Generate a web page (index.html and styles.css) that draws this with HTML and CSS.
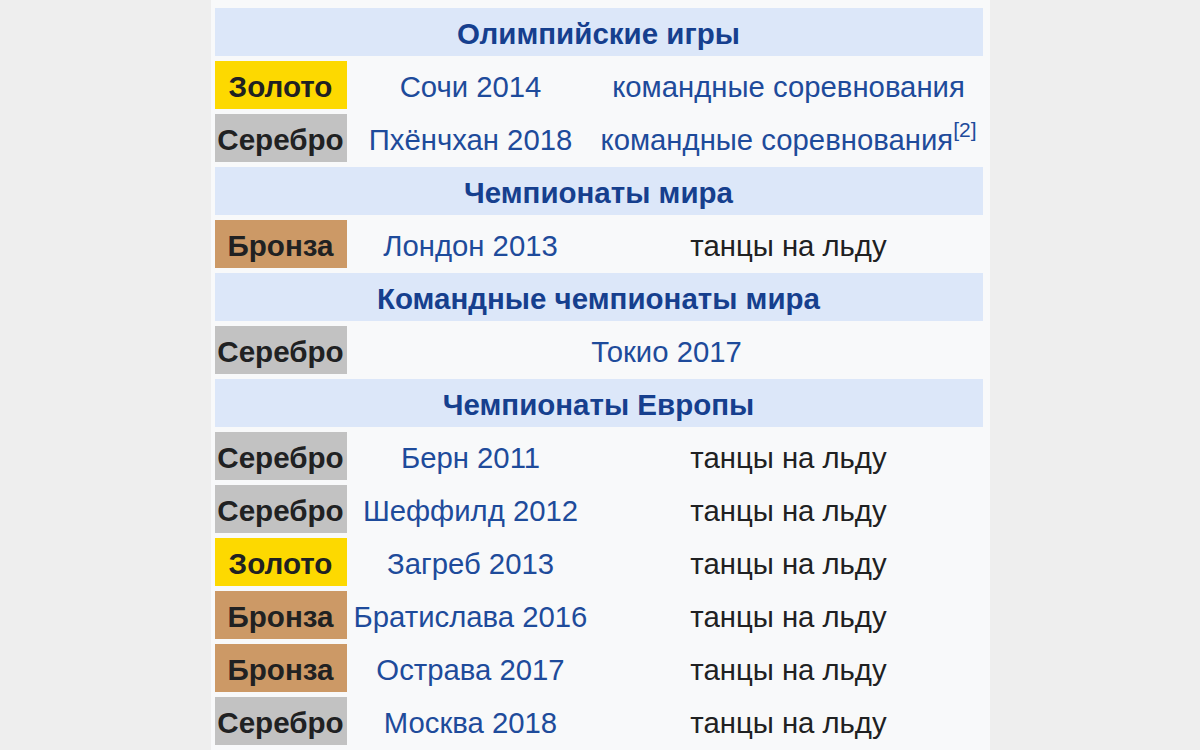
FILE: index.html
```html
<!DOCTYPE html>
<html lang="ru">
<head>
<meta charset="utf-8">
<title>Медали</title>
<link rel="stylesheet" href="styles.css">
</head>
<body>
<div class="panel">
  <div class="medals">
    <div class="head">Олимпийские игры</div>
    <div class="medal gold">Золото</div><div class="link">Сочи 2014</div><div class="link">командные соревнования</div>
    <div class="medal silver">Серебро</div><div class="link">Пхёнчхан 2018</div><div class="link"><span>командные соревнования<sup class="ref">[2]</sup></span></div>

    <div class="head">Чемпионаты мира</div>
    <div class="medal bronze">Бронза</div><div class="link">Лондон 2013</div><div class="plain">танцы на льду</div>

    <div class="head">Командные чемпионаты мира</div>
    <div class="medal silver">Серебро</div><div class="link wide">Токио 2017</div>

    <div class="head">Чемпионаты Европы</div>
    <div class="medal silver">Серебро</div><div class="link">Берн 2011</div><div class="plain">танцы на льду</div>
    <div class="medal silver">Серебро</div><div class="link">Шеффилд 2012</div><div class="plain">танцы на льду</div>
    <div class="medal gold">Золото</div><div class="link">Загреб 2013</div><div class="plain">танцы на льду</div>
    <div class="medal bronze">Бронза</div><div class="link">Братислава 2016</div><div class="plain">танцы на льду</div>
    <div class="medal bronze">Бронза</div><div class="link">Острава 2017</div><div class="plain">танцы на льду</div>
    <div class="medal silver">Серебро</div><div class="link">Москва 2018</div><div class="plain">танцы на льду</div>
  </div>
</div>
</body>
</html>
```

FILE: styles.css
```css
html, body {
  margin: 0;
  padding: 0;
  background: #eeeeee;
  height: 100%;
  overflow: hidden;
}

body {
  display: flex;
  justify-content: center;
  font-family: "Liberation Sans", Arial, sans-serif;
}

.panel {
  width: 779px;
  min-height: 750px;
  box-sizing: border-box;
  background: #f8f9fa;
  padding: 8px 7px 0 4px;
}

.medals {
  display: grid;
  grid-template-columns: 132px 240px 388px;
  grid-auto-rows: 48px;
  column-gap: 4px;
  row-gap: 5px;
  font-size: 29.3px;
}

.medals > div {
  display: flex;
  align-items: center;
  justify-content: center;
  white-space: nowrap;
  padding-top: 3px;
  box-sizing: border-box;
}

.head {
  grid-column: 1 / -1;
  background: #dce7f9;
  color: #163f8e;
  font-weight: bold;
  font-size: 29.5px;
}

.medal {
  font-weight: bold;
  color: #202122;
  font-size: 29.6px;
}

.gold { background: #fdd900; }
.silver { background: #c2c2c2; }
.bronze { background: #cc9966; }

.link {
  color: #1e4b9b;
}

.wide {
  grid-column: 2 / 4;
}

.plain {
  color: #202122;
}

.ref {
  font-size: 21px;
  line-height: 0;
  vertical-align: 0.6em;
}
```
